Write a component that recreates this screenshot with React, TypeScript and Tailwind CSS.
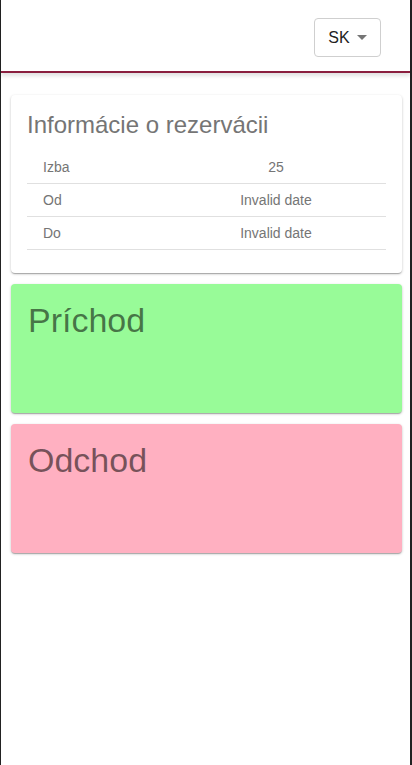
import React from "react";

const cardShadow =
  "shadow-[0_1px_3px_0_rgba(0,0,0,0.2),0_1px_1px_0_rgba(0,0,0,0.14),0_2px_1px_-1px_rgba(0,0,0,0.12)]";

function Row({ label, value }: { label: string; value: string }) {
  return (
    <div className="grid grid-cols-[139px_1fr] h-[33px] items-center border-b border-[#e0e0e0] text-[14px] text-[#757575]">
      <div className="pl-4">{label}</div>
      <div className="text-center">{value}</div>
    </div>
  );
}

export default function App() {
  return (
    <div
      className="min-h-[765px] w-[412px] bg-white border-l border-r-2 border-[#222]"
      style={{ fontFamily: '"Liberation Sans", Arial, sans-serif' }}
    >
      <header className="h-[73px] border-b-2 border-[#8a1e3e] bg-white flex items-start justify-end pr-[29px] pt-[18px] shadow-[0_3px_4px_rgba(0,0,0,0.12)] relative">
        <button className="w-[67px] h-[39px] border border-[#cfcfcf] rounded-[4px] flex items-center justify-center gap-[7px] text-[16px] text-[#222] bg-white">
          <span>SK</span>
          <svg width="10" height="5" viewBox="0 0 10 5">
            <path d="M0 0 L10 0 L5 5 Z" fill="#757575" />
          </svg>
        </button>
      </header>

      <main className="ml-[10px] mr-[8px] pt-[22px] flex flex-col gap-[11px]">
        <section className={`bg-white rounded-[4px] ${cardShadow} px-4 pt-4 pb-[23px]`}>
          <h2 className="text-[24px] leading-[28px] text-[#757575] font-normal mb-[12px]">
            Informácie o rezervácii
          </h2>
          <div>
            <Row label="Izba" value="25" />
            <Row label="Od" value="Invalid date" />
            <Row label="Do" value="Invalid date" />
          </div>
        </section>

        <section className={`bg-[#98fb98] rounded-[4px] ${cardShadow} h-[129px] px-[17px] pt-[16px]`}>
          <h2 className="text-[34px] leading-[40px] text-black/55 font-normal">Príchod</h2>
        </section>

        <section className={`bg-[#ffb0c1] rounded-[4px] ${cardShadow} h-[129px] px-[17px] pt-[16px]`}>
          <h2 className="text-[34px] leading-[40px] text-black/55 font-normal">Odchod</h2>
        </section>
      </main>
    </div>
  );
}
